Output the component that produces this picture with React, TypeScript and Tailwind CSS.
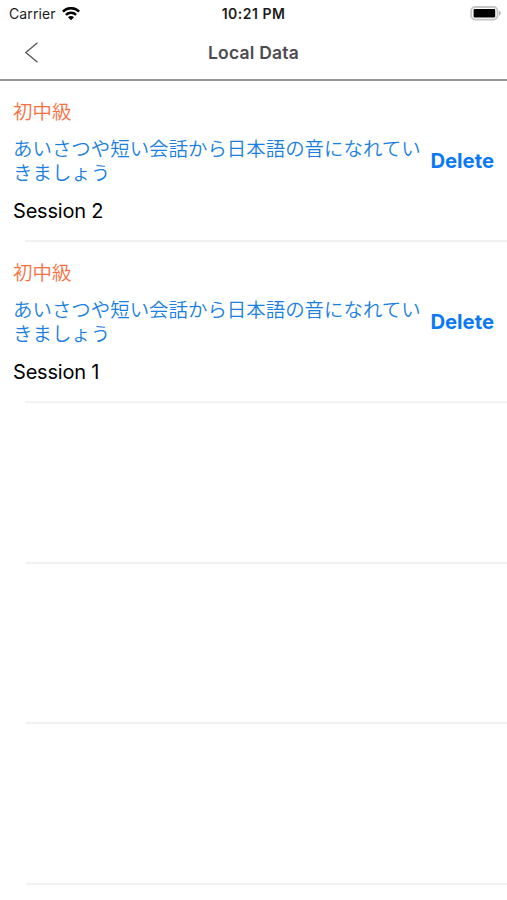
interface ISession {
    id: string;
    level: string;
    title: string;
    name: string;
}

const sessions: ISession[] = [
    {
        id: '2',
        level: "初中級",
        title: "あいさつや短い会話から日本語の音になれていきましょう",
        name: "Session 2",
    },
    {
        id: '1',
        level: "初中級",
        title: "あいさつや短い会話から日本語の音になれていきましょう",
        name: "Session 1",
    },
]

// blank rows that fill the rest of the table
const emptyRows = [0, 1, 2]

function WifiIcon() {
    return (
        <svg width="18" height="14" viewBox="0 0 18 14" fill="none" stroke="#000" strokeWidth="2.5">
            <path d="M0.9 4.6C5.4 0.1 12.6 0.1 17.1 4.6" />
            <path d="M3.9 7.9C6.8 5.1 11.2 5.1 14.1 7.9" />
            <path d="M9 13.3L6 10.3C7.7 8.7 10.3 8.7 12 10.3Z" fill="#000" stroke="none" />
        </svg>
    )
}

function BatteryIcon() {
    return (
        <svg width="32" height="15" viewBox="0 0 32 15">
            <rect x="1.2" y="1" width="26.3" height="12.6" rx="4" fill="#fff" stroke="#c4c4c4" strokeWidth="1.8" />
            <rect x="3.6" y="3" width="21.6" height="8.6" rx="1" fill="#000" />
            <path d="M29 4.8V9.8C31.4 9 31.4 5.8 29 4.8Z" fill="#b5b5b5" />
        </svg>
    )
}

function StatusBar() {
    return (
        <div className="grid h-[27px] grid-cols-3 items-center text-[#1c1c1c]">
            <div className="flex items-center gap-[6px] pl-[9px]">
                <span className="text-[14px] tracking-[0.1px]">Carrier</span>
                <WifiIcon />
            </div>
            <span className="text-center text-[14px] font-semibold tracking-[0.5px]">10:21 PM</span>
            <div className="flex justify-end pr-[5px]">
                <BatteryIcon />
            </div>
        </div>
    )
}

function NavBar() {
    return (
        <header className="grid h-[54px] grid-cols-3 items-center border-b-2 border-[#979797]">
            <button className="pl-[24px]" aria-label="Back">
                <svg width="15" height="22" viewBox="0 0 15 22" fill="none" stroke="#555" strokeWidth="1.3">
                    <path d="M13.5 0.8L1.8 10.6L13.5 20.2" />
                </svg>
            </button>
            <h1 className="text-center text-[17.5px] font-semibold tracking-[0.2px] text-[#4c4c50]">Local Data</h1>
        </header>
    )
}

export default function App() {
    return (
        <main className="h-[900px] w-[507px] overflow-hidden bg-white font-['Inter','Noto_Sans_CJK_JP',sans-serif]">
            <StatusBar />
            <NavBar />
            <ul>
                {sessions.map((s) => (
                    <li key={s.id} className="flex h-[161px] flex-col">
                        <div className="flex flex-1 items-center px-[13px]">
                            <div className="w-[412px] shrink-0 pt-[2px]">
                                <p className="text-[19.45px] font-[350] leading-[24px] text-[#f9703f]">{s.level}</p>
                                <p className="mt-[13px] text-[19.45px] font-[350] leading-[24.5px] text-[#1a7fe0]">{s.title}</p>
                                <p className="mt-[12px] text-[20px] leading-[26px] tracking-[-0.2px] text-black">{s.name}</p>
                            </div>
                            <button className="ml-auto pt-[2px] text-[20.3px] font-bold text-[#0b78f5]">Delete</button>
                        </div>
                        <div className="ml-[25px] h-[2px] bg-[#f2f2f2]" />
                    </li>
                ))}
                {emptyRows.map((r) => (
                    <li key={r} className="flex h-[160.6px] flex-col justify-end">
                        <div className="ml-[26px] h-[2px] bg-[#f2f2f2]" />
                    </li>
                ))}
            </ul>
        </main>
    )
}
